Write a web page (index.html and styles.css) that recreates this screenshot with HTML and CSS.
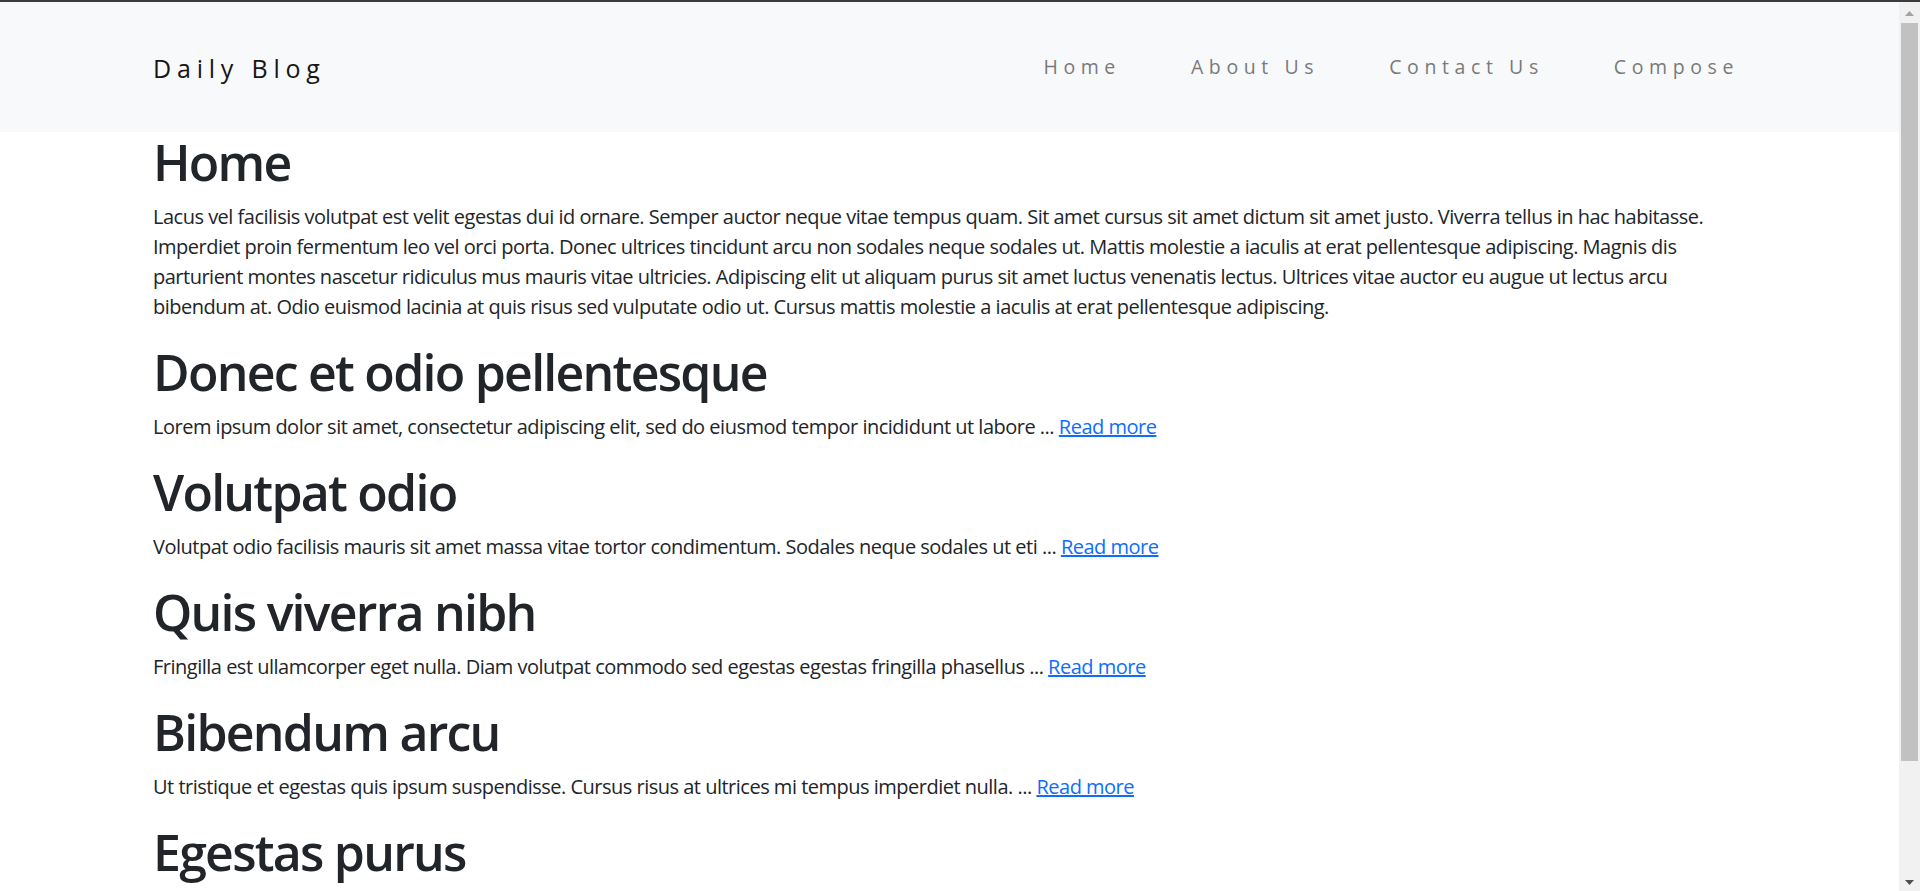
FILE: index.html
```html
<!DOCTYPE html>
<html lang="en">
<head>
<meta charset="utf-8">
<title>Daily Blog</title>
<link rel="stylesheet" href="styles.css">
</head>
<body>
<header class="topbar">
  <nav class="navbar">
    <a class="brand" href="#">Daily Blog</a>
    <ul class="nav-links">
      <li><a href="#">Home</a></li>
      <li><a href="#">About Us</a></li>
      <li><a href="#">Contact Us</a></li>
      <li><a href="#">Compose</a></li>
    </ul>
  </nav>
</header>
<main class="content">
  <h1>Home</h1>
  <p>Lacus vel facilisis volutpat est velit egestas dui id ornare. Semper auctor neque vitae tempus quam. Sit amet cursus sit amet dictum sit amet justo. Viverra tellus in hac habitasse. Imperdiet proin fermentum leo vel orci porta. Donec ultrices tincidunt arcu non sodales neque sodales ut. Mattis molestie a iaculis at erat pellentesque adipiscing. Magnis dis parturient montes nascetur ridiculus mus mauris vitae ultricies. Adipiscing elit ut aliquam purus sit amet luctus venenatis lectus. Ultrices vitae auctor eu augue ut lectus arcu bibendum at. Odio euismod lacinia at quis risus sed vulputate odio ut. Cursus mattis molestie a iaculis at erat pellentesque adipiscing.</p>

  <h1>Donec et odio pellentesque</h1>
  <p>Lorem ipsum dolor sit amet, consectetur adipiscing elit, sed do eiusmod tempor incididunt ut labore ... <a href="#">Read more</a></p>

  <h1>Volutpat odio</h1>
  <p>Volutpat odio facilisis mauris sit amet massa vitae tortor condimentum. Sodales neque sodales ut eti ... <a href="#">Read more</a></p>

  <h1>Quis viverra nibh</h1>
  <p>Fringilla est ullamcorper eget nulla. Diam volutpat commodo sed egestas egestas fringilla phasellus ... <a href="#">Read more</a></p>

  <h1>Bibendum arcu</h1>
  <p>Ut tristique et egestas quis ipsum suspendisse. Cursus risus at ultrices mi tempus imperdiet nulla. ... <a href="#">Read more</a></p>

  <h1>Egestas purus</h1>
  <p>Egestas purus viverra accumsan in nisl nisi scelerisque eu ultrices vitae auctor eu augue ... <a href="#">Read more</a></p>
</main>
<div class="scrollbar" aria-hidden="true">
  <div class="sb-arrow sb-up">
    <svg width="9" height="5" viewBox="0 0 9 5"><path d="M4.5 0 L9 5 L0 5 Z" fill="#a3a3a3"/></svg>
  </div>
  <div class="sb-track">
    <div class="sb-thumb"></div>
  </div>
  <div class="sb-arrow sb-down">
    <svg width="9" height="5" viewBox="0 0 9 5"><path d="M0 0 L9 0 L4.5 5 Z" fill="#505050"/></svg>
  </div>
</div>
</body>
</html>
```
FILE: styles.css
```css
html {
  background: #ffffff;
}
body {
  margin: 0;
  font-family: "Open Sans", "Noto Sans", "Liberation Sans", sans-serif;
  font-size: 20px;
  line-height: 30px;
  color: #212529;
  background: #ffffff;
  letter-spacing: -0.025em;
  overflow: hidden;
  height: 891px;
}

.topbar {
  background: #f8f9fa;
  border-top: 2px solid #3c3c3c;
}
.navbar {
  width: 1593px;
  margin-left: 153px;
  height: 130px;
  display: flex;
  align-items: center;
  justify-content: space-between;
}
.brand {
  font-size: 25px;
  font-weight: 400;
  letter-spacing: 5.8px;
  color: #161616;
  text-decoration: none;
  margin-top: 1px;
}
.nav-links {
  list-style: none;
  margin: 0;
  padding: 0;
  display: flex;
  gap: 56px;
  margin-top: 0;
}
.nav-links a {
  display: block;
  padding: 0 7px;
  font-size: 19.5px;
  font-weight: 400;
  letter-spacing: 5.6px;
  color: #7a7a7a;
  text-decoration: none;
}

.content {
  width: 1593px;
  margin-left: 153px;
}
h1 {
  margin: 0 0 10px;
  font-size: 50px;
  line-height: 60px;
  font-weight: 600;
  letter-spacing: -0.035em;
}
p {
  margin: 0 0 20px;
}
p a {
  color: #0d6efd;
  text-decoration: underline;
}

.scrollbar {
  position: fixed;
  top: 2px;
  right: 0;
  bottom: 0;
  width: 21px;
  background: #f1f1f1;
  display: flex;
  flex-direction: column;
}
.sb-arrow {
  height: 21px;
  display: flex;
  align-items: center;
  justify-content: center;
  flex: none;
}
.sb-up {
  align-items: flex-start;
  padding-top: 9px;
  height: 12px;
}
.sb-down {
  align-items: flex-end;
  padding-bottom: 6px;
  height: 15px;
}
.sb-track {
  flex: 1;
  padding: 0 2px;
}
.sb-thumb {
  height: 738px;
  background: #c1c1c1;
}
```
